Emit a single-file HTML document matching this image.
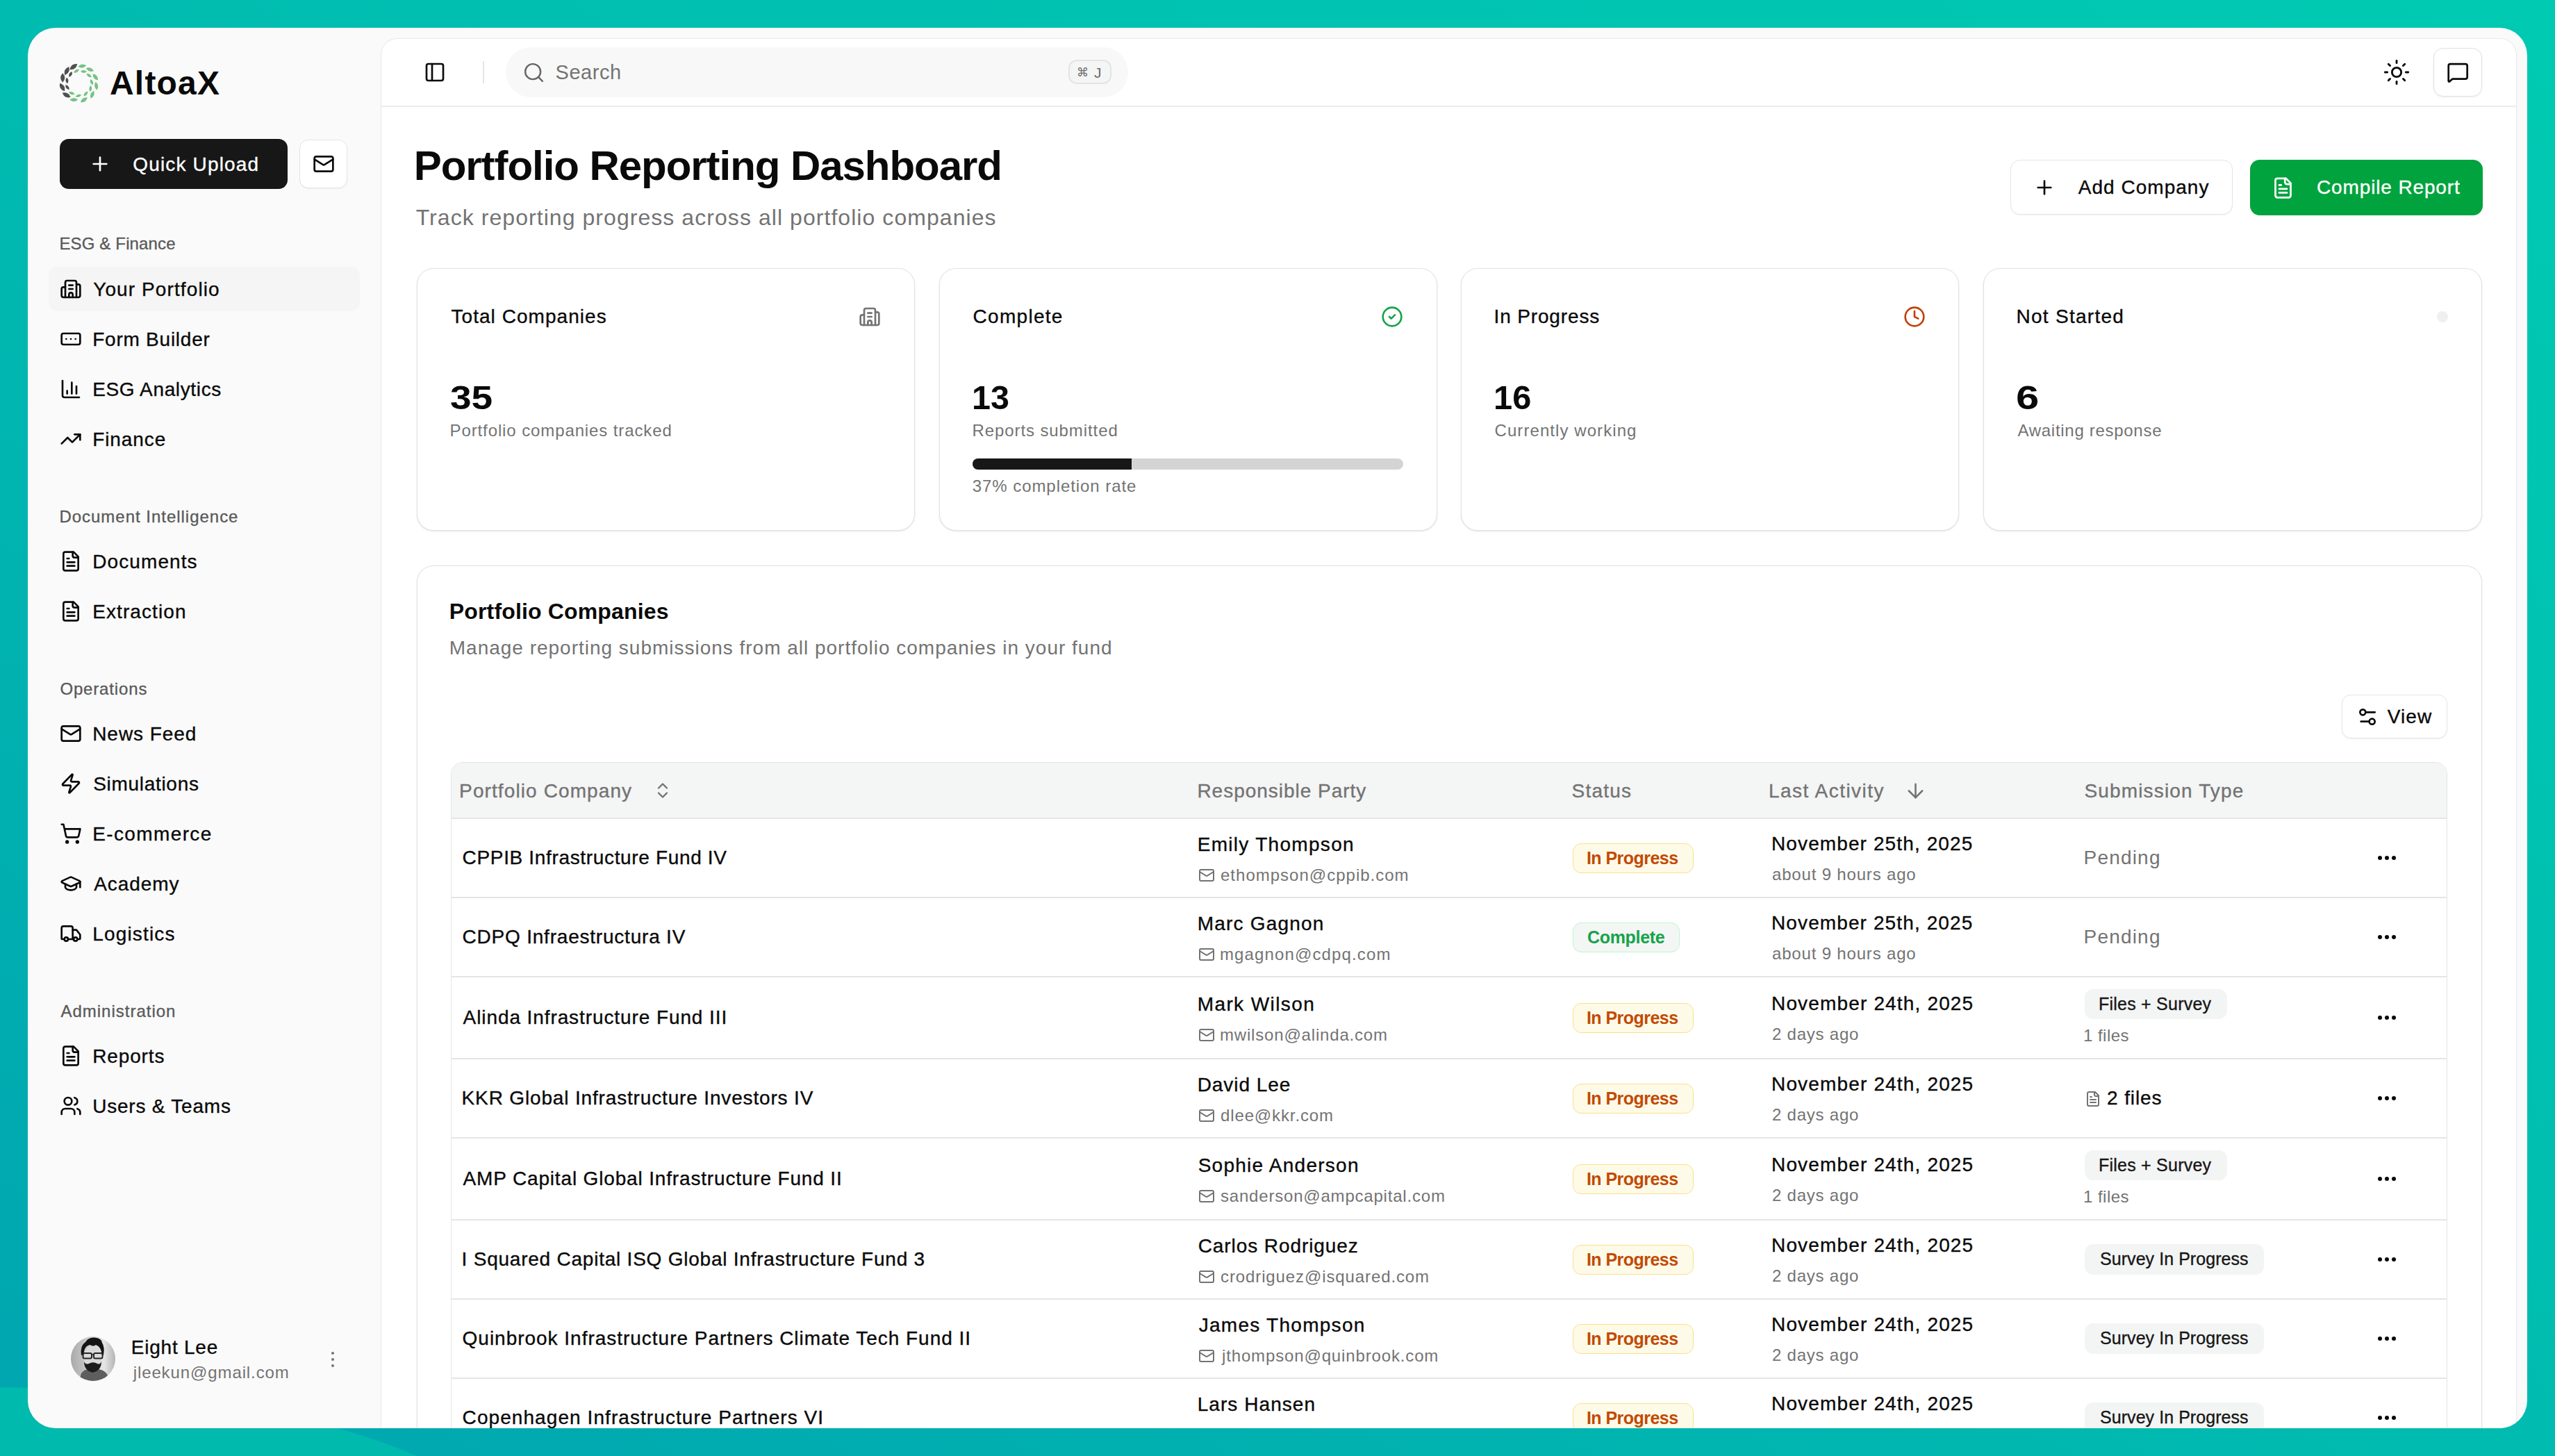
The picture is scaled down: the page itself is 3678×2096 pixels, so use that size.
<!DOCTYPE html><html><head><meta charset="utf-8"><style>
*{margin:0;padding:0}
html,body{width:3678px;height:2096px;overflow:hidden}
body{position:relative;background:#00bcb0;font-family:"Liberation Sans",sans-serif}
.t{position:absolute;white-space:nowrap;line-height:1}
.med{-webkit-text-stroke:0.35px currentColor}
.r{position:absolute}
.ic{position:absolute;overflow:visible}
#win{position:absolute;left:0;top:0;width:3678px;height:2096px;background:transparent;clip-path:inset(40px 40px 40px 40px round 40px)}
#win::before{content:"";position:absolute;left:40px;top:40px;width:3598px;height:2016px;background:#fafafa}
</style></head><body><svg class="ic" style="left:0;top:0" width="3678" height="2096" viewBox="0 0 3678 2096"><defs><linearGradient id="bg1" x1="1" y1="0" x2="0" y2="1"><stop offset="0" stop-color="#00cab2"/><stop offset="0.5" stop-color="#00bcb0"/><stop offset="1" stop-color="#00a5b0"/></linearGradient></defs><rect width="3678" height="2096" fill="url(#bg1)"/><path d="M0 1997C230 2000 450 2030 600 2096L0 2096Z" fill="#00baae"/></svg><div id="win"><svg class="ic" style="left:0;top:0" width="200" height="200" viewBox="0 0 200 200"><path d="M-6.00 0Q0 -5.20 6.00 0Q0 5.20 -6.00 0Z" transform="translate(138.69 123.71) rotate(81.0)" fill="#76c384"/><path d="M-6.00 0Q0 -5.20 6.00 0Q0 5.20 -6.00 0Z" transform="translate(132.87 136.20) rotate(113.0)" fill="#76c384"/><path d="M-6.00 0Q0 -5.20 6.00 0Q0 5.20 -6.00 0Z" transform="translate(120.89 143.83) rotate(146.0)" fill="#76c384"/><path d="M-6.00 0Q0 -5.20 6.00 0Q0 5.20 -6.00 0Z" transform="translate(106.27 143.58) rotate(180.0)" fill="#76c384"/><path d="M-6.75 0Q0 -6.20 6.75 0Q0 6.20 -6.75 0Z" transform="translate(95.72 136.85) rotate(209.0)" fill="#505050"/><path d="M-6.75 0Q0 -6.20 6.75 0Q0 6.20 -6.75 0Z" transform="translate(89.64 125.42) rotate(239.0)" fill="#505050"/><path d="M-6.75 0Q0 -6.20 6.75 0Q0 6.20 -6.75 0Z" transform="translate(90.22 112.07) rotate(270.0)" fill="#505050"/><path d="M-6.75 0Q0 -6.20 6.75 0Q0 6.20 -6.75 0Z" transform="translate(96.32 102.12) rotate(297.0)" fill="#505050"/><path d="M-6.75 0Q0 -6.20 6.75 0Q0 6.20 -6.75 0Z" transform="translate(105.86 96.16) rotate(323.0)" fill="#505050"/><path d="M-6.00 0Q0 -5.20 6.00 0Q0 5.20 -6.00 0Z" transform="translate(118.34 95.18) rotate(352.0)" fill="#76c384"/><path d="M-6.00 0Q0 -5.20 6.00 0Q0 5.20 -6.00 0Z" transform="translate(129.39 100.10) rotate(380.0)" fill="#76c384"/><path d="M-6.00 0Q0 -5.20 6.00 0Q0 5.20 -6.00 0Z" transform="translate(137.34 110.84) rotate(411.0)" fill="#76c384"/><path d="M-4.50 0Q0 -4.00 4.50 0Q0 4.00 -4.50 0Z" transform="translate(120.45 103.00) rotate(363.0)" fill="#76c384"/><path d="M-4.50 0Q0 -4.00 4.50 0Q0 4.00 -4.50 0Z" transform="translate(128.18 108.72) rotate(394.0)" fill="#76c384"/><path d="M-4.50 0Q0 -4.00 4.50 0Q0 4.00 -4.50 0Z" transform="translate(131.93 118.23) rotate(427.0)" fill="#76c384"/><path d="M-4.50 0Q0 -4.00 4.50 0Q0 4.00 -4.50 0Z" transform="translate(130.31 127.41) rotate(97.0)" fill="#76c384"/><path d="M-4.50 0Q0 -4.00 4.50 0Q0 4.00 -4.50 0Z" transform="translate(123.54 135.06) rotate(130.0)" fill="#76c384"/><path d="M-4.50 0Q0 -4.00 4.50 0Q0 4.00 -4.50 0Z" transform="translate(113.06 137.78) rotate(165.0)" fill="#76c384"/><path d="M-4.50 0Q0 -4.00 4.50 0Q0 4.00 -4.50 0Z" transform="translate(103.17 134.18) rotate(199.0)" fill="#76c384"/><path d="M-4.50 0Q0 -4.00 4.50 0Q0 4.00 -4.50 0Z" transform="translate(96.98 125.66) rotate(233.0)" fill="#505050"/><path d="M-4.50 0Q0 -4.00 4.50 0Q0 4.00 -4.50 0Z" transform="translate(96.43 115.90) rotate(264.5)" fill="#505050"/><path d="M-4.50 0Q0 -4.00 4.50 0Q0 4.00 -4.50 0Z" transform="translate(101.50 106.85) rotate(298.0)" fill="#505050"/><path d="M-4.50 0Q0 -4.00 4.50 0Q0 4.00 -4.50 0Z" transform="translate(109.95 102.26) rotate(329.0)" fill="#76c384"/></svg><div class="t" style="left:158.0px;top:96.4px;font-size:48px;color:#0a0a0a;font-weight:700;letter-spacing:1.2px;">AltoaX</div><div class="r" style="left:86px;top:200px;width:328px;height:72px;background:#171717;border-radius:13px;"></div><svg class="ic" style="left:128.0px;top:220.0px;" width="32" height="32" viewBox="0 0 24 24" fill="none" stroke="#fff" stroke-width="2" stroke-linecap="round" stroke-linejoin="round"><path d="M5 12h14"/><path d="M12 5v14"/></svg><div class="t med" style="left:191.3px;top:222.7px;font-size:28px;color:#fff;letter-spacing:1.155px;">Quick Upload</div><div class="r" style="left:431px;top:201px;width:69px;height:70px;background:#fff;border:1.5px solid #e5e5e5;border-radius:13px;box-shadow:0 1px 2px rgba(0,0,0,.05);box-sizing:border-box;"></div><svg class="ic" style="left:450.0px;top:220.0px;" width="32" height="32" viewBox="0 0 24 24" fill="none" stroke="#0a0a0a" stroke-width="2" stroke-linecap="round" stroke-linejoin="round"><rect width="20" height="16" x="2" y="4" rx="2"/><path d="m22 7-8.97 5.7a1.94 1.94 0 0 1-2.06 0L2 7"/></svg><div class="t med" style="left:85.4px;top:339.3px;font-size:24px;color:#5a5a5a;letter-spacing:0.15px;">ESG &amp; Finance</div><div class="t med" style="left:85.4px;top:731.8px;font-size:24px;color:#5a5a5a;letter-spacing:0.98px;">Document Intelligence</div><div class="t med" style="left:86.4px;top:979.8px;font-size:24px;color:#5a5a5a;letter-spacing:0.844px;">Operations</div><div class="t med" style="left:87.4px;top:1444.0px;font-size:24px;color:#5a5a5a;letter-spacing:1.0px;">Administration</div><div class="r" style="left:70px;top:384px;width:448px;height:64px;background:#f5f5f5;border-radius:13px;"></div><svg class="ic" style="left:86.0px;top:400.0px;" width="32" height="32" viewBox="0 0 24 24" fill="none" stroke="#0a0a0a" stroke-width="2" stroke-linecap="round" stroke-linejoin="round"><path d="M10 12h4"/><path d="M10 8h4"/><path d="M14 21v-3a2 2 0 0 0-4 0v3"/><path d="M6 10H4a2 2 0 0 0-2 2v7a2 2 0 0 0 2 2h16a2 2 0 0 0 2-2V9a2 2 0 0 0-2-2h-2"/><path d="M6 21V5a2 2 0 0 1 2-2h8a2 2 0 0 1 2 2v16"/></svg><div class="t med" style="left:134.2px;top:402.5px;font-size:28px;color:#0a0a0a;letter-spacing:1.108px;">Your Portfolio</div><svg class="ic" style="left:86.0px;top:472.0px;" width="32" height="32" viewBox="0 0 24 24" fill="none" stroke="#0a0a0a" stroke-width="2" stroke-linecap="round" stroke-linejoin="round"><rect width="20" height="12" x="2" y="6" rx="2"/><path d="M12 12h.01"/><path d="M17 12h.01"/><path d="M7 12h.01"/></svg><div class="t med" style="left:133.2px;top:474.5px;font-size:28px;color:#0a0a0a;letter-spacing:0.764px;">Form Builder</div><svg class="ic" style="left:86.0px;top:544.0px;" width="32" height="32" viewBox="0 0 24 24" fill="none" stroke="#0a0a0a" stroke-width="2" stroke-linecap="round" stroke-linejoin="round"><path d="M3 3v16a2 2 0 0 0 2 2h16"/><path d="M18 17V9"/><path d="M13 17V5"/><path d="M8 17v-3"/></svg><div class="t med" style="left:133.2px;top:546.5px;font-size:28px;color:#0a0a0a;letter-spacing:0.642px;">ESG Analytics</div><svg class="ic" style="left:86.0px;top:616.0px;" width="32" height="32" viewBox="0 0 24 24" fill="none" stroke="#0a0a0a" stroke-width="2" stroke-linecap="round" stroke-linejoin="round"><polyline points="22 7 13.5 15.5 8.5 10.5 2 17"/><polyline points="16 7 22 7 22 13"/></svg><div class="t med" style="left:133.2px;top:618.5px;font-size:28px;color:#0a0a0a;letter-spacing:0.9px;">Finance</div><svg class="ic" style="left:86.0px;top:792.0px;" width="32" height="32" viewBox="0 0 24 24" fill="none" stroke="#0a0a0a" stroke-width="2" stroke-linecap="round" stroke-linejoin="round"><path d="M15 2H6a2 2 0 0 0-2 2v16a2 2 0 0 0 2 2h12a2 2 0 0 0 2-2V7Z"/><path d="M14 2v4a2 2 0 0 0 2 2h4"/><path d="M10 9H8"/><path d="M16 13H8"/><path d="M16 17H8"/></svg><div class="t med" style="left:133.2px;top:794.5px;font-size:28px;color:#0a0a0a;letter-spacing:1.1px;">Documents</div><svg class="ic" style="left:86.0px;top:864.0px;" width="32" height="32" viewBox="0 0 24 24" fill="none" stroke="#0a0a0a" stroke-width="2" stroke-linecap="round" stroke-linejoin="round"><path d="M15 2H6a2 2 0 0 0-2 2v16a2 2 0 0 0 2 2h12a2 2 0 0 0 2-2V7Z"/><path d="M14 2v4a2 2 0 0 0 2 2h4"/><path d="M10 9H8"/><path d="M16 13H8"/><path d="M16 17H8"/></svg><div class="t med" style="left:133.2px;top:866.5px;font-size:28px;color:#0a0a0a;letter-spacing:1.089px;">Extraction</div><svg class="ic" style="left:86.0px;top:1040.0px;" width="32" height="32" viewBox="0 0 24 24" fill="none" stroke="#0a0a0a" stroke-width="2" stroke-linecap="round" stroke-linejoin="round"><rect width="20" height="16" x="2" y="4" rx="2"/><path d="m22 7-8.97 5.7a1.94 1.94 0 0 1-2.06 0L2 7"/></svg><div class="t med" style="left:133.2px;top:1042.5px;font-size:28px;color:#0a0a0a;letter-spacing:0.95px;">News Feed</div><svg class="ic" style="left:86.0px;top:1112.0px;" width="32" height="32" viewBox="0 0 24 24" fill="none" stroke="#0a0a0a" stroke-width="2" stroke-linecap="round" stroke-linejoin="round"><path d="M4 14a1 1 0 0 1-.78-1.63l9.9-10.2a.5.5 0 0 1 .86.46l-1.92 6.02A1 1 0 0 0 13 10h7a1 1 0 0 1 .78 1.63l-9.9 10.2a.5.5 0 0 1-.86-.46l1.92-6.02A1 1 0 0 0 11 14z"/></svg><div class="t med" style="left:134.2px;top:1114.5px;font-size:28px;color:#0a0a0a;letter-spacing:0.7px;">Simulations</div><svg class="ic" style="left:86.0px;top:1184.0px;" width="32" height="32" viewBox="0 0 24 24" fill="none" stroke="#0a0a0a" stroke-width="2" stroke-linecap="round" stroke-linejoin="round"><circle cx="8" cy="21" r="1"/><circle cx="19" cy="21" r="1"/><path d="M2.05 2.05h2l2.66 12.42a2 2 0 0 0 2 1.58h9.78a2 2 0 0 0 1.95-1.57l1.65-7.43H5.12"/></svg><div class="t med" style="left:133.2px;top:1186.5px;font-size:28px;color:#0a0a0a;letter-spacing:1.378px;">E-commerce</div><svg class="ic" style="left:86.0px;top:1256.0px;" width="32" height="32" viewBox="0 0 24 24" fill="none" stroke="#0a0a0a" stroke-width="2" stroke-linecap="round" stroke-linejoin="round"><path d="M21.42 10.922a1 1 0 0 0-.019-1.838L12.83 5.18a2 2 0 0 0-1.66 0L2.6 9.08a1 1 0 0 0 0 1.832l8.57 3.908a2 2 0 0 0 1.66 0z"/><path d="M22 10v6"/><path d="M6 12.5V16a6 3 0 0 0 12 0v-3.5"/></svg><div class="t med" style="left:135.2px;top:1258.5px;font-size:28px;color:#0a0a0a;letter-spacing:0.917px;">Academy</div><svg class="ic" style="left:86.0px;top:1328.0px;" width="32" height="32" viewBox="0 0 24 24" fill="none" stroke="#0a0a0a" stroke-width="2" stroke-linecap="round" stroke-linejoin="round"><path d="M14 18V6a2 2 0 0 0-2-2H4a2 2 0 0 0-2 2v11a1 1 0 0 0 1 1h2"/><path d="M15 18H9"/><path d="M19 18h2a1 1 0 0 0 1-1v-3.65a1 1 0 0 0-.22-.624l-3.48-4.35A1 1 0 0 0 17.52 8H14"/><circle cx="17" cy="18" r="2"/><circle cx="7" cy="18" r="2"/></svg><div class="t med" style="left:133.2px;top:1330.5px;font-size:28px;color:#0a0a0a;letter-spacing:1.162px;">Logistics</div><svg class="ic" style="left:86.0px;top:1504.0px;" width="32" height="32" viewBox="0 0 24 24" fill="none" stroke="#0a0a0a" stroke-width="2" stroke-linecap="round" stroke-linejoin="round"><path d="M15 2H6a2 2 0 0 0-2 2v16a2 2 0 0 0 2 2h12a2 2 0 0 0 2-2V7Z"/><path d="M14 2v4a2 2 0 0 0 2 2h4"/><path d="M10 9H8"/><path d="M16 13H8"/><path d="M16 17H8"/></svg><div class="t med" style="left:133.2px;top:1506.5px;font-size:28px;color:#0a0a0a;letter-spacing:0.867px;">Reports</div><svg class="ic" style="left:86.0px;top:1576.0px;" width="32" height="32" viewBox="0 0 24 24" fill="none" stroke="#0a0a0a" stroke-width="2" stroke-linecap="round" stroke-linejoin="round"><path d="M16 21v-2a4 4 0 0 0-4-4H6a4 4 0 0 0-4 4v2"/><circle cx="9" cy="7" r="4"/><path d="M22 21v-2a4 4 0 0 0-3-3.87"/><path d="M16 3.13a4 4 0 0 1 0 7.75"/></svg><div class="t med" style="left:133.2px;top:1578.5px;font-size:28px;color:#0a0a0a;letter-spacing:0.783px;">Users &amp; Teams</div><svg class="ic" style="left:102px;top:1924px" width="64" height="64" viewBox="0 0 64 64">
<defs><linearGradient id="ag" x1="0" y1="0" x2="1" y2="0"><stop offset="0" stop-color="#a9a9a9"/><stop offset="0.3" stop-color="#c4c4c4"/><stop offset="0.75" stop-color="#e6e6e6"/><stop offset="1" stop-color="#b3b3b3"/></linearGradient>
<clipPath id="ac"><circle cx="32" cy="32" r="32"/></clipPath></defs>
<g clip-path="url(#ac)"><rect width="64" height="64" fill="url(#ag)"/>
<path d="M12 64 L15 53 Q19 47 27 47 L37 47 Q47 47 52 54 L56 64Z" fill="#5e5e5e"/>
<path d="M24 47 Q31 56 40 47Z" fill="#8a8a8a"/>
<ellipse cx="31.5" cy="30" rx="13" ry="17" fill="#d9d9d9"/>
<path d="M15 27 Q13 13 21 8 Q25 1 34 1.5 Q44 2 45 9 Q49 15 47 27 L44.5 26 Q44 15 36 12 Q32 15 28 12 Q19 13 18.5 26Z" fill="#141414"/>
<path d="M19 36 Q19 49 31.5 52 Q44 49 44 36 Q42 41 38 39 Q32 35.5 26 39 Q21 41 19 36Z" fill="#1c1c1c"/>
<rect x="17.5" y="24" width="12.5" height="7.5" rx="2" fill="none" stroke="#262626" stroke-width="2"/>
<rect x="33" y="24" width="12.5" height="7.5" rx="2" fill="none" stroke="#262626" stroke-width="2"/>
<path d="M30 26h3" stroke="#262626" stroke-width="1.6"/>
</g></svg><div class="t med" style="left:188.7px;top:1926.3px;font-size:28px;color:#0a0a0a;letter-spacing:0.787px;">Eight Lee</div><div class="t" style="left:191.7px;top:1963.7px;font-size:24px;color:#737373;letter-spacing:0.894px;">jleekun@gmail.com</div><div class="r" style="left:477px;top:1946px;width:4px;height:4px;background:#737373;border-radius:50%;"></div><div class="r" style="left:477px;top:1955px;width:4px;height:4px;background:#737373;border-radius:50%;"></div><div class="r" style="left:477px;top:1964px;width:4px;height:4px;background:#737373;border-radius:50%;"></div><div class="r" style="left:548px;top:55px;width:3075px;height:2145px;background:#fff;border:1px solid #e9e9e9;border-radius:24px;box-shadow:0 1px 3px rgba(0,0,0,.04);box-sizing:border-box;"></div><svg class="ic" style="left:610.0px;top:88.0px;" width="32" height="32" viewBox="0 0 24 24" fill="none" stroke="#0a0a0a" stroke-width="2" stroke-linecap="round" stroke-linejoin="round"><rect width="18" height="18" x="3" y="3" rx="2"/><path d="M9 3v18"/></svg><div class="r" style="left:695px;top:88px;width:2px;height:32px;background:#e5e5e5;"></div><div class="r" style="left:728px;top:68px;width:896px;height:72px;background:#f8f8f8;border-radius:36px;"></div><svg class="ic" style="left:751.5px;top:87.5px;" width="33" height="33" viewBox="0 0 24 24" fill="none" stroke="#666666" stroke-width="1.75" stroke-linecap="round" stroke-linejoin="round"><circle cx="11" cy="11" r="8"/><path d="m21 21-4.3-4.3"/></svg><div class="t" style="left:799.5px;top:89.9px;font-size:29px;color:#737373;letter-spacing:0.54px;">Search</div><div class="r" style="left:1538px;top:86px;width:62px;height:35px;background:#f4f5f5;border:2px solid #e4e4e4;border-radius:12px;box-sizing:border-box;"></div><div class="t" style="left:1550.0px;top:95.6px;font-size:17px;color:#6b6b6b;letter-spacing:0.0px;">&#8984;</div><div class="t" style="left:1575.0px;top:93.5px;font-size:21px;color:#6b6b6b;letter-spacing:0px;">J</div><div class="r" style="left:549px;top:152px;width:3073px;height:2px;background:#ececec;"></div><svg class="ic" style="left:3430.0px;top:84.0px;" width="40" height="40" viewBox="0 0 24 24" fill="none" stroke="#0a0a0a" stroke-width="1.7" stroke-linecap="round" stroke-linejoin="round"><circle cx="12" cy="12" r="4"/><path d="M12 2v2"/><path d="M12 20v2"/><path d="m4.93 4.93 1.41 1.41"/><path d="m17.66 17.66 1.41 1.41"/><path d="M2 12h2"/><path d="M20 12h2"/><path d="m6.34 17.66-1.41 1.41"/><path d="m19.07 4.93-1.41 1.41"/></svg><div class="r" style="left:3503px;top:69px;width:70px;height:70px;background:#fff;border:1.5px solid #e2e2e2;border-radius:14px;box-shadow:0 1px 3px rgba(0,0,0,.07);box-sizing:border-box;"></div><svg class="ic" style="left:3521.6px;top:88.2px;" width="32.4" height="32.4" viewBox="0 0 24 24" fill="none" stroke="#0a0a0a" stroke-width="2" stroke-linecap="round" stroke-linejoin="round"><path d="M22 17a2 2 0 0 1-2 2H6.828a2 2 0 0 0-1.414.586l-2.202 2.202A.71.71 0 0 1 2 21.286V5a2 2 0 0 1 2-2h16a2 2 0 0 1 2 2z"/></svg><div class="t" style="left:595.7px;top:209.2px;font-size:60px;color:#0a0a0a;font-weight:700;letter-spacing:-1.05px;">Portfolio Reporting Dashboard</div><div class="t" style="left:598.7px;top:296.9px;font-size:32px;color:#737373;letter-spacing:1.056px;">Track reporting progress across all portfolio companies</div><div class="r" style="left:2894px;top:230px;width:320px;height:79px;background:#fff;border:1.5px solid #e5e5e5;border-radius:14px;box-shadow:0 1px 2px rgba(0,0,0,.06);box-sizing:border-box;"></div><svg class="ic" style="left:2927.0px;top:254.0px;" width="32" height="32" viewBox="0 0 24 24" fill="none" stroke="#0a0a0a" stroke-width="2" stroke-linecap="round" stroke-linejoin="round"><path d="M5 12h14"/><path d="M12 5v14"/></svg><div class="t med" style="left:2991.8px;top:256.3px;font-size:28px;color:#0a0a0a;letter-spacing:1.02px;">Add Company</div><div class="r" style="left:3239px;top:230px;width:335px;height:80px;background:#01a33e;border-radius:14px;"></div><svg class="ic" style="left:3270.0px;top:253.5px;" width="33" height="33" viewBox="0 0 24 24" fill="none" stroke="#fff" stroke-width="2" stroke-linecap="round" stroke-linejoin="round"><path d="M15 2H6a2 2 0 0 0-2 2v16a2 2 0 0 0 2 2h12a2 2 0 0 0 2-2V7Z"/><path d="M14 2v4a2 2 0 0 0 2 2h4"/><path d="M10 9H8"/><path d="M16 13H8"/><path d="M16 17H8"/></svg><div class="t med" style="left:3335.0px;top:256.3px;font-size:28px;color:#fff;letter-spacing:0.862px;">Compile Report</div><div class="r" style="left:600px;top:386px;width:717px;height:378px;background:#fff;border:1.5px solid #e2e2e2;border-radius:24px;box-shadow:0 1px 3px rgba(0,0,0,.08),0 1px 2px rgba(0,0,0,.04);box-sizing:border-box;"></div><div class="t med" style="left:649.5px;top:442.3px;font-size:28px;color:#0a0a0a;letter-spacing:1.043px;">Total Companies</div><div class="t" style="left:648.4px;top:548.9px;font-size:48px;color:#0a0a0a;font-weight:700;transform:scaleX(1.1451);transform-origin:0 0;">35</div><div class="t" style="left:647.5px;top:607.7px;font-size:24px;color:#737373;letter-spacing:0.892px;">Portfolio companies tracked</div><div class="r" style="left:1352px;top:386px;width:717px;height:378px;background:#fff;border:1.5px solid #e2e2e2;border-radius:24px;box-shadow:0 1px 3px rgba(0,0,0,.08),0 1px 2px rgba(0,0,0,.04);box-sizing:border-box;"></div><div class="t med" style="left:1400.5px;top:442.3px;font-size:28px;color:#0a0a0a;letter-spacing:1.3px;">Complete</div><div class="t" style="left:1398.5px;top:548.9px;font-size:48px;color:#0a0a0a;font-weight:700;transform:scaleX(1.0102);transform-origin:0 0;">13</div><div class="t" style="left:1399.5px;top:607.7px;font-size:24px;color:#737373;letter-spacing:0.906px;">Reports submitted</div><div class="r" style="left:2103px;top:386px;width:717px;height:378px;background:#fff;border:1.5px solid #e2e2e2;border-radius:24px;box-shadow:0 1px 3px rgba(0,0,0,.08),0 1px 2px rgba(0,0,0,.04);box-sizing:border-box;"></div><div class="t med" style="left:2150.5px;top:442.3px;font-size:28px;color:#0a0a0a;letter-spacing:0.86px;">In Progress</div><div class="t" style="left:2149.5px;top:548.9px;font-size:48px;color:#0a0a0a;font-weight:700;transform:scaleX(1.0163);transform-origin:0 0;">16</div><div class="t" style="left:2151.5px;top:607.7px;font-size:24px;color:#737373;letter-spacing:1.075px;">Currently working</div><div class="r" style="left:2855px;top:386px;width:718px;height:378px;background:#fff;border:1.5px solid #e2e2e2;border-radius:24px;box-shadow:0 1px 3px rgba(0,0,0,.08),0 1px 2px rgba(0,0,0,.04);box-sizing:border-box;"></div><div class="t med" style="left:2902.5px;top:442.3px;font-size:28px;color:#0a0a0a;letter-spacing:1.28px;">Not Started</div><div class="t" style="left:2902.0px;top:548.9px;font-size:48px;color:#0a0a0a;font-weight:700;transform:scaleX(1.2435);transform-origin:0 0;">6</div><div class="t" style="left:2904.5px;top:607.7px;font-size:24px;color:#737373;letter-spacing:0.706px;">Awaiting response</div><svg class="ic" style="left:1236.0px;top:440.0px;" width="32" height="32" viewBox="0 0 24 24" fill="none" stroke="#737373" stroke-width="2" stroke-linecap="round" stroke-linejoin="round"><path d="M10 12h4"/><path d="M10 8h4"/><path d="M14 21v-3a2 2 0 0 0-4 0v3"/><path d="M6 10H4a2 2 0 0 0-2 2v7a2 2 0 0 0 2 2h16a2 2 0 0 0 2-2V9a2 2 0 0 0-2-2h-2"/><path d="M6 21V5a2 2 0 0 1 2-2h8a2 2 0 0 1 2 2v16"/></svg><svg class="ic" style="left:1988.0px;top:440.0px;" width="32" height="32" viewBox="0 0 24 24" fill="none" stroke="#16a34a" stroke-width="2" stroke-linecap="round" stroke-linejoin="round"><circle cx="12" cy="12" r="10"/><path d="m9 12 2 2 4-4"/></svg><svg class="ic" style="left:2739.5px;top:440.0px;" width="32" height="32" viewBox="0 0 24 24" fill="none" stroke="#c2410c" stroke-width="2" stroke-linecap="round" stroke-linejoin="round"><circle cx="12" cy="12" r="10"/><path d="M12 6v6l4 2"/></svg><div class="r" style="left:3508px;top:448px;width:16px;height:16px;background:#eef0ef;border-radius:50%;"></div><div class="r" style="left:1400px;top:660px;width:620px;height:16px;background:#d4d4d4;border-radius:8px;overflow:hidden;"></div><div class="r" style="left:1400px;top:660px;width:229px;height:16px;background:#171717;border-radius:8px 0 0 8px;"></div><div class="t" style="left:1399.8px;top:687.7px;font-size:24px;color:#737373;letter-spacing:0.933px;">37% completion rate</div><div class="r" style="left:600px;top:814px;width:2973px;height:1486px;background:#fff;border:1.5px solid #e2e2e2;border-radius:24px;box-shadow:0 1px 3px rgba(0,0,0,.08),0 1px 2px rgba(0,0,0,.04);box-sizing:border-box;"></div><div class="t" style="left:646.8px;top:863.9px;font-size:32px;color:#0a0a0a;font-weight:700;letter-spacing:0.156px;">Portfolio Companies</div><div class="t" style="left:646.8px;top:918.8px;font-size:28px;color:#737373;letter-spacing:0.988px;">Manage reporting submissions from all portfolio companies in your fund</div><div class="r" style="left:3371px;top:1000px;width:152px;height:63px;background:#fff;border:1.5px solid #e5e5e5;border-radius:13px;box-shadow:0 1px 2px rgba(0,0,0,.06);box-sizing:border-box;"></div><svg class="ic" style="left:3392.0px;top:1016.0px;" width="32" height="32" viewBox="0 0 24 24" fill="none" stroke="#0a0a0a" stroke-width="2" stroke-linecap="round" stroke-linejoin="round"><path d="M20 7h-9"/><path d="M14 17H5"/><circle cx="17" cy="17" r="3"/><circle cx="7" cy="7" r="3"/></svg><div class="t med" style="left:3436.8px;top:1018.3px;font-size:28px;color:#0a0a0a;letter-spacing:1.067px;">View</div><div class="r" style="left:649px;top:1097px;width:2874px;height:1203px;background:#fff;border:1.5px solid #e5e5e5;border-radius:17px;box-sizing:border-box;"></div><div class="r" style="left:650px;top:1098px;width:2872px;height:80px;background:#f4f5f5;border-radius:16px 16px 0 0;"></div><div class="r" style="left:649px;top:1177px;width:2874px;height:2px;background:#e5e5e5;"></div><div class="t med" style="left:661.1px;top:1124.8px;font-size:28px;color:#737373;letter-spacing:1.106px;">Portfolio Company</div><svg class="ic" style="left:945px;top:1126px" width="18" height="24" viewBox="0 0 18 24" fill="none" stroke="#737373" stroke-width="2.4" stroke-linecap="round" stroke-linejoin="round"><path d="M3 8.5 9 2.5 15 8.5"/><path d="M3 15.5 9 21.5 15 15.5"/></svg><div class="t med" style="left:1723.4px;top:1124.8px;font-size:28px;color:#737373;letter-spacing:0.981px;">Responsible Party</div><div class="t med" style="left:2262.6px;top:1124.8px;font-size:28px;color:#737373;letter-spacing:1.22px;">Status</div><div class="t med" style="left:2546.0px;top:1124.8px;font-size:28px;color:#737373;letter-spacing:1.475px;">Last Activity</div><svg class="ic" style="left:2740.5px;top:1121.5px;" width="33" height="33" viewBox="0 0 24 24" fill="none" stroke="#737373" stroke-width="1.9" stroke-linecap="round" stroke-linejoin="round"><path d="M12 5v14"/><path d="m19 12-7 7-7-7"/></svg><div class="t med" style="left:3000.5px;top:1124.8px;font-size:28px;color:#737373;letter-spacing:1.15px;">Submission Type</div><div class="r" style="left:650px;top:1291px;width:2872px;height:2px;background:#e5e5e5;"></div><div class="t med" style="left:665.6px;top:1221.3px;font-size:28px;color:#0a0a0a;letter-spacing:0.659px;">CPPIB Infrastructure Fund IV</div><div class="t med" style="left:1723.7px;top:1201.8px;font-size:28px;color:#0a0a0a;letter-spacing:1.3px;">Emily Thompson</div><svg class="ic" style="left:1725.0px;top:1247.5px;" width="24" height="24" viewBox="0 0 24 24" fill="none" stroke="#737373" stroke-width="2" stroke-linecap="round" stroke-linejoin="round"><rect width="20" height="16" x="2" y="4" rx="2"/><path d="m22 7-8.97 5.7a1.94 1.94 0 0 1-2.06 0L2 7"/></svg><div class="t" style="left:1757.0px;top:1247.7px;font-size:24px;color:#737373;letter-spacing:1.006px;">ethompson@cppib.com</div><div class="r" style="left:2263.5px;top:1213.5px;width:174.0px;height:43.0px;background:#fefae8;border:1.5px solid #fbe08a;border-radius:12px;box-sizing:border-box;"></div><div class="t" style="left:2283.9px;top:1222.8px;font-size:25px;color:#c24a04;font-weight:700;letter-spacing:-0.54px;">In Progress</div><div class="t med" style="left:2550.0px;top:1200.8px;font-size:28px;color:#0a0a0a;letter-spacing:1.111px;">November 25th, 2025</div><div class="t" style="left:2551.0px;top:1246.7px;font-size:24px;color:#737373;letter-spacing:0.825px;">about 9 hours ago</div><div class="t" style="left:2999.5px;top:1221.3px;font-size:28px;color:#737373;letter-spacing:1.2px;">Pending</div><div class="r" style="left:3422.7px;top:1232.0px;width:6.0px;height:6.0px;background:#0a0a0a;border-radius:50%;"></div><div class="r" style="left:3432.7px;top:1232.0px;width:6.0px;height:6.0px;background:#0a0a0a;border-radius:50%;"></div><div class="r" style="left:3442.7px;top:1232.0px;width:6.0px;height:6.0px;background:#0a0a0a;border-radius:50%;"></div><div class="r" style="left:650px;top:1405px;width:2872px;height:2px;background:#e5e5e5;"></div><div class="t med" style="left:665.6px;top:1335.3px;font-size:28px;color:#0a0a0a;letter-spacing:0.786px;">CDPQ Infraestructura IV</div><div class="t med" style="left:1723.7px;top:1315.8px;font-size:28px;color:#0a0a0a;letter-spacing:1.2px;">Marc Gagnon</div><svg class="ic" style="left:1725.0px;top:1361.5px;" width="24" height="24" viewBox="0 0 24 24" fill="none" stroke="#737373" stroke-width="2" stroke-linecap="round" stroke-linejoin="round"><rect width="20" height="16" x="2" y="4" rx="2"/><path d="m22 7-8.97 5.7a1.94 1.94 0 0 1-2.06 0L2 7"/></svg><div class="t" style="left:1756.0px;top:1361.7px;font-size:24px;color:#737373;letter-spacing:1.127px;">mgagnon@cdpq.com</div><div class="r" style="left:2263.5px;top:1327.5px;width:154.5px;height:43.0px;background:#f3f6f4;border:1.5px solid #bbf7d0;border-radius:12px;box-sizing:border-box;"></div><div class="t" style="left:2285.0px;top:1336.8px;font-size:25px;color:#16a34a;font-weight:700;letter-spacing:-0.329px;">Complete</div><div class="t med" style="left:2550.0px;top:1314.8px;font-size:28px;color:#0a0a0a;letter-spacing:1.111px;">November 25th, 2025</div><div class="t" style="left:2551.0px;top:1360.7px;font-size:24px;color:#737373;letter-spacing:0.825px;">about 9 hours ago</div><div class="t" style="left:2999.5px;top:1335.3px;font-size:28px;color:#737373;letter-spacing:1.2px;">Pending</div><div class="r" style="left:3422.7px;top:1346.0px;width:6.0px;height:6.0px;background:#0a0a0a;border-radius:50%;"></div><div class="r" style="left:3432.7px;top:1346.0px;width:6.0px;height:6.0px;background:#0a0a0a;border-radius:50%;"></div><div class="r" style="left:3442.7px;top:1346.0px;width:6.0px;height:6.0px;background:#0a0a0a;border-radius:50%;"></div><div class="r" style="left:650px;top:1523px;width:2872px;height:2px;background:#e5e5e5;"></div><div class="t med" style="left:666.6px;top:1451.3px;font-size:28px;color:#0a0a0a;letter-spacing:0.907px;">Alinda Infrastructure Fund III</div><div class="t med" style="left:1723.7px;top:1431.8px;font-size:28px;color:#0a0a0a;letter-spacing:1.4px;">Mark Wilson</div><svg class="ic" style="left:1725.0px;top:1477.5px;" width="24" height="24" viewBox="0 0 24 24" fill="none" stroke="#737373" stroke-width="2" stroke-linecap="round" stroke-linejoin="round"><rect width="20" height="16" x="2" y="4" rx="2"/><path d="m22 7-8.97 5.7a1.94 1.94 0 0 1-2.06 0L2 7"/></svg><div class="t" style="left:1756.0px;top:1477.7px;font-size:24px;color:#737373;letter-spacing:0.818px;">mwilson@alinda.com</div><div class="r" style="left:2263.5px;top:1443.5px;width:174.0px;height:43.0px;background:#fefae8;border:1.5px solid #fbe08a;border-radius:12px;box-sizing:border-box;"></div><div class="t" style="left:2283.9px;top:1452.8px;font-size:25px;color:#c24a04;font-weight:700;letter-spacing:-0.54px;">In Progress</div><div class="t med" style="left:2550.0px;top:1430.8px;font-size:28px;color:#0a0a0a;letter-spacing:1.161px;">November 24th, 2025</div><div class="t" style="left:2551.0px;top:1476.7px;font-size:24px;color:#737373;letter-spacing:0.778px;">2 days ago</div><div class="r" style="left:3000.5px;top:1423.5px;width:205.5px;height:43.5px;background:#f3f4f4;border-radius:12px;"></div><div class="t med" style="left:3021.0px;top:1432.8px;font-size:25px;color:#171717;letter-spacing:0.231px;">Files + Survey</div><div class="t" style="left:2999.0px;top:1478.7px;font-size:24px;color:#737373;letter-spacing:0.467px;">1 files</div><div class="r" style="left:3422.7px;top:1462.0px;width:6.0px;height:6.0px;background:#0a0a0a;border-radius:50%;"></div><div class="r" style="left:3432.7px;top:1462.0px;width:6.0px;height:6.0px;background:#0a0a0a;border-radius:50%;"></div><div class="r" style="left:3442.7px;top:1462.0px;width:6.0px;height:6.0px;background:#0a0a0a;border-radius:50%;"></div><div class="r" style="left:650px;top:1637px;width:2872px;height:2px;background:#e5e5e5;"></div><div class="t med" style="left:664.6px;top:1567.3px;font-size:28px;color:#0a0a0a;letter-spacing:0.841px;">KKR Global Infrastructure Investors IV</div><div class="t med" style="left:1723.7px;top:1547.8px;font-size:28px;color:#0a0a0a;letter-spacing:0.938px;">David Lee</div><svg class="ic" style="left:1725.0px;top:1593.5px;" width="24" height="24" viewBox="0 0 24 24" fill="none" stroke="#737373" stroke-width="2" stroke-linecap="round" stroke-linejoin="round"><rect width="20" height="16" x="2" y="4" rx="2"/><path d="m22 7-8.97 5.7a1.94 1.94 0 0 1-2.06 0L2 7"/></svg><div class="t" style="left:1757.0px;top:1593.7px;font-size:24px;color:#737373;letter-spacing:0.873px;">dlee@kkr.com</div><div class="r" style="left:2263.5px;top:1559.5px;width:174.0px;height:43.0px;background:#fefae8;border:1.5px solid #fbe08a;border-radius:12px;box-sizing:border-box;"></div><div class="t" style="left:2283.9px;top:1568.8px;font-size:25px;color:#c24a04;font-weight:700;letter-spacing:-0.54px;">In Progress</div><div class="t med" style="left:2550.0px;top:1546.8px;font-size:28px;color:#0a0a0a;letter-spacing:1.161px;">November 24th, 2025</div><div class="t" style="left:2551.0px;top:1592.7px;font-size:24px;color:#737373;letter-spacing:0.778px;">2 days ago</div><svg class="ic" style="left:3001.0px;top:1569.5px;" width="24" height="24" viewBox="0 0 24 24" fill="none" stroke="#737373" stroke-width="2" stroke-linecap="round" stroke-linejoin="round"><path d="M15 2H6a2 2 0 0 0-2 2v16a2 2 0 0 0 2 2h12a2 2 0 0 0 2-2V7Z"/><path d="M14 2v4a2 2 0 0 0 2 2h4"/><path d="M10 9H8"/><path d="M16 13H8"/><path d="M16 17H8"/></svg><div class="t med" style="left:3033.0px;top:1566.7px;font-size:28px;color:#0a0a0a;letter-spacing:0.9px;">2 files</div><div class="r" style="left:3422.7px;top:1578.0px;width:6.0px;height:6.0px;background:#0a0a0a;border-radius:50%;"></div><div class="r" style="left:3432.7px;top:1578.0px;width:6.0px;height:6.0px;background:#0a0a0a;border-radius:50%;"></div><div class="r" style="left:3442.7px;top:1578.0px;width:6.0px;height:6.0px;background:#0a0a0a;border-radius:50%;"></div><div class="r" style="left:650px;top:1755px;width:2872px;height:2px;background:#e5e5e5;"></div><div class="t med" style="left:666.6px;top:1683.3px;font-size:28px;color:#0a0a0a;letter-spacing:0.84px;">AMP Capital Global Infrastructure Fund II</div><div class="t med" style="left:1724.7px;top:1663.8px;font-size:28px;color:#0a0a0a;letter-spacing:1.25px;">Sophie Anderson</div><svg class="ic" style="left:1725.0px;top:1709.5px;" width="24" height="24" viewBox="0 0 24 24" fill="none" stroke="#737373" stroke-width="2" stroke-linecap="round" stroke-linejoin="round"><rect width="20" height="16" x="2" y="4" rx="2"/><path d="m22 7-8.97 5.7a1.94 1.94 0 0 1-2.06 0L2 7"/></svg><div class="t" style="left:1757.0px;top:1709.7px;font-size:24px;color:#737373;letter-spacing:0.8px;">sanderson@ampcapital.com</div><div class="r" style="left:2263.5px;top:1675.5px;width:174.0px;height:43.0px;background:#fefae8;border:1.5px solid #fbe08a;border-radius:12px;box-sizing:border-box;"></div><div class="t" style="left:2283.9px;top:1684.8px;font-size:25px;color:#c24a04;font-weight:700;letter-spacing:-0.54px;">In Progress</div><div class="t med" style="left:2550.0px;top:1662.8px;font-size:28px;color:#0a0a0a;letter-spacing:1.161px;">November 24th, 2025</div><div class="t" style="left:2551.0px;top:1708.7px;font-size:24px;color:#737373;letter-spacing:0.778px;">2 days ago</div><div class="r" style="left:3000.5px;top:1655.5px;width:205.5px;height:43.5px;background:#f3f4f4;border-radius:12px;"></div><div class="t med" style="left:3021.0px;top:1664.8px;font-size:25px;color:#171717;letter-spacing:0.231px;">Files + Survey</div><div class="t" style="left:2999.0px;top:1710.7px;font-size:24px;color:#737373;letter-spacing:0.467px;">1 files</div><div class="r" style="left:3422.7px;top:1694.0px;width:6.0px;height:6.0px;background:#0a0a0a;border-radius:50%;"></div><div class="r" style="left:3432.7px;top:1694.0px;width:6.0px;height:6.0px;background:#0a0a0a;border-radius:50%;"></div><div class="r" style="left:3442.7px;top:1694.0px;width:6.0px;height:6.0px;background:#0a0a0a;border-radius:50%;"></div><div class="r" style="left:650px;top:1869px;width:2872px;height:2px;background:#e5e5e5;"></div><div class="t med" style="left:664.6px;top:1799.3px;font-size:28px;color:#0a0a0a;letter-spacing:0.771px;">I Squared Capital ISQ Global Infrastructure Fund 3</div><div class="t med" style="left:1724.7px;top:1779.8px;font-size:28px;color:#0a0a0a;letter-spacing:0.92px;">Carlos Rodriguez</div><svg class="ic" style="left:1725.0px;top:1825.5px;" width="24" height="24" viewBox="0 0 24 24" fill="none" stroke="#737373" stroke-width="2" stroke-linecap="round" stroke-linejoin="round"><rect width="20" height="16" x="2" y="4" rx="2"/><path d="m22 7-8.97 5.7a1.94 1.94 0 0 1-2.06 0L2 7"/></svg><div class="t" style="left:1757.0px;top:1825.7px;font-size:24px;color:#737373;letter-spacing:0.891px;">crodriguez@isquared.com</div><div class="r" style="left:2263.5px;top:1791.5px;width:174.0px;height:43.0px;background:#fefae8;border:1.5px solid #fbe08a;border-radius:12px;box-sizing:border-box;"></div><div class="t" style="left:2283.9px;top:1800.8px;font-size:25px;color:#c24a04;font-weight:700;letter-spacing:-0.54px;">In Progress</div><div class="t med" style="left:2550.0px;top:1778.8px;font-size:28px;color:#0a0a0a;letter-spacing:1.161px;">November 24th, 2025</div><div class="t" style="left:2551.0px;top:1824.7px;font-size:24px;color:#737373;letter-spacing:0.778px;">2 days ago</div><div class="r" style="left:3001px;top:1791.0px;width:258px;height:44.0px;background:#f3f4f4;border-radius:12px;"></div><div class="t med" style="left:3023.0px;top:1800.2px;font-size:25px;color:#171717;letter-spacing:0.059px;">Survey In Progress</div><div class="r" style="left:3422.7px;top:1810.0px;width:6.0px;height:6.0px;background:#0a0a0a;border-radius:50%;"></div><div class="r" style="left:3432.7px;top:1810.0px;width:6.0px;height:6.0px;background:#0a0a0a;border-radius:50%;"></div><div class="r" style="left:3442.7px;top:1810.0px;width:6.0px;height:6.0px;background:#0a0a0a;border-radius:50%;"></div><div class="r" style="left:650px;top:1983px;width:2872px;height:2px;background:#e5e5e5;"></div><div class="t med" style="left:665.6px;top:1913.3px;font-size:28px;color:#0a0a0a;letter-spacing:0.979px;">Quinbrook Infrastructure Partners Climate Tech Fund II</div><div class="t med" style="left:1725.7px;top:1893.8px;font-size:28px;color:#0a0a0a;letter-spacing:1.277px;">James Thompson</div><svg class="ic" style="left:1725.0px;top:1939.5px;" width="24" height="24" viewBox="0 0 24 24" fill="none" stroke="#737373" stroke-width="2" stroke-linecap="round" stroke-linejoin="round"><rect width="20" height="16" x="2" y="4" rx="2"/><path d="m22 7-8.97 5.7a1.94 1.94 0 0 1-2.06 0L2 7"/></svg><div class="t" style="left:1759.0px;top:1939.7px;font-size:24px;color:#737373;letter-spacing:0.855px;">jthompson@quinbrook.com</div><div class="r" style="left:2263.5px;top:1905.5px;width:174.0px;height:43.0px;background:#fefae8;border:1.5px solid #fbe08a;border-radius:12px;box-sizing:border-box;"></div><div class="t" style="left:2283.9px;top:1914.8px;font-size:25px;color:#c24a04;font-weight:700;letter-spacing:-0.54px;">In Progress</div><div class="t med" style="left:2550.0px;top:1892.8px;font-size:28px;color:#0a0a0a;letter-spacing:1.161px;">November 24th, 2025</div><div class="t" style="left:2551.0px;top:1938.7px;font-size:24px;color:#737373;letter-spacing:0.778px;">2 days ago</div><div class="r" style="left:3001px;top:1905.0px;width:258px;height:44.0px;background:#f3f4f4;border-radius:12px;"></div><div class="t med" style="left:3023.0px;top:1914.2px;font-size:25px;color:#171717;letter-spacing:0.059px;">Survey In Progress</div><div class="r" style="left:3422.7px;top:1924.0px;width:6.0px;height:6.0px;background:#0a0a0a;border-radius:50%;"></div><div class="r" style="left:3432.7px;top:1924.0px;width:6.0px;height:6.0px;background:#0a0a0a;border-radius:50%;"></div><div class="r" style="left:3442.7px;top:1924.0px;width:6.0px;height:6.0px;background:#0a0a0a;border-radius:50%;"></div><div class="t med" style="left:665.6px;top:2027.3px;font-size:28px;color:#0a0a0a;letter-spacing:1.072px;">Copenhagen Infrastructure Partners VI</div><div class="t med" style="left:1723.7px;top:2007.8px;font-size:28px;color:#0a0a0a;letter-spacing:1.06px;">Lars Hansen</div><svg class="ic" style="left:1725.0px;top:2053.5px;" width="24" height="24" viewBox="0 0 24 24" fill="none" stroke="#737373" stroke-width="2" stroke-linecap="round" stroke-linejoin="round"><rect width="20" height="16" x="2" y="4" rx="2"/><path d="m22 7-8.97 5.7a1.94 1.94 0 0 1-2.06 0L2 7"/></svg><div class="t" style="left:1758.0px;top:2053.7px;font-size:24px;color:#737373;letter-spacing:0.8px;">lhansen@cip.dk</div><div class="r" style="left:2263.5px;top:2019.5px;width:174.0px;height:43.0px;background:#fefae8;border:1.5px solid #fbe08a;border-radius:12px;box-sizing:border-box;"></div><div class="t" style="left:2283.9px;top:2028.8px;font-size:25px;color:#c24a04;font-weight:700;letter-spacing:-0.54px;">In Progress</div><div class="t med" style="left:2550.0px;top:2006.8px;font-size:28px;color:#0a0a0a;letter-spacing:1.161px;">November 24th, 2025</div><div class="t" style="left:2551.0px;top:2052.7px;font-size:24px;color:#737373;letter-spacing:0.778px;">2 days ago</div><div class="r" style="left:3001px;top:2019.0px;width:258px;height:44.0px;background:#f3f4f4;border-radius:12px;"></div><div class="t med" style="left:3023.0px;top:2028.2px;font-size:25px;color:#171717;letter-spacing:0.059px;">Survey In Progress</div><div class="r" style="left:3422.7px;top:2038.0px;width:6.0px;height:6.0px;background:#0a0a0a;border-radius:50%;"></div><div class="r" style="left:3432.7px;top:2038.0px;width:6.0px;height:6.0px;background:#0a0a0a;border-radius:50%;"></div><div class="r" style="left:3442.7px;top:2038.0px;width:6.0px;height:6.0px;background:#0a0a0a;border-radius:50%;"></div></div></body></html>
